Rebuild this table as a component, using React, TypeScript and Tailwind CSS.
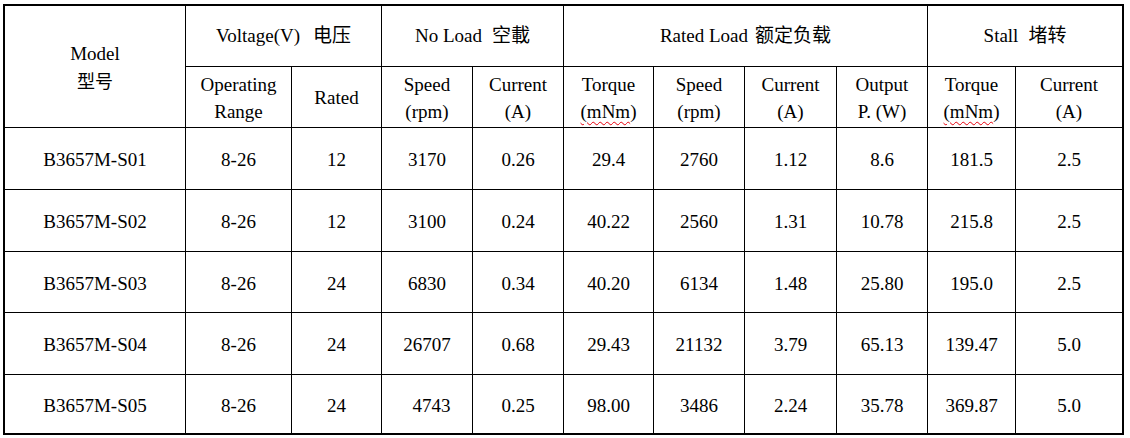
import type React from 'react';

type Row = {
  model: string;
  range: string;
  rated: string;
  nlSpeed: string;
  nlCurrent: string;
  torque: string;
  speed: string;
  current: string;
  output: string;
  stallTorque: string;
  stallCurrent: string;
};

const ROWS: Row[] = [
  { model: 'B3657M-S01', range: '8-26', rated: '12', nlSpeed: '3170', nlCurrent: '0.26', torque: '29.4', speed: '2760', current: '1.12', output: '8.6', stallTorque: '181.5', stallCurrent: '2.5' },
  { model: 'B3657M-S02', range: '8-26', rated: '12', nlSpeed: '3100', nlCurrent: '0.24', torque: '40.22', speed: '2560', current: '1.31', output: '10.78', stallTorque: '215.8', stallCurrent: '2.5' },
  { model: 'B3657M-S03', range: '8-26', rated: '24', nlSpeed: '6830', nlCurrent: '0.34', torque: '40.20', speed: '6134', current: '1.48', output: '25.80', stallTorque: '195.0', stallCurrent: '2.5' },
  { model: 'B3657M-S04', range: '8-26', rated: '24', nlSpeed: '26707', nlCurrent: '0.68', torque: '29.43', speed: '21132', current: '3.79', output: '65.13', stallTorque: '139.47', stallCurrent: '5.0' },
  { model: 'B3657M-S05', range: '8-26', rated: '24', nlSpeed: '4743', nlCurrent: '0.25', torque: '98.00', speed: '3486', current: '2.24', output: '35.78', stallTorque: '369.87', stallCurrent: '5.0' },
];

function Cell({ className = '', children }: { className?: string; children: React.ReactNode }) {
  return (
    <div className={`bg-white flex flex-col items-center justify-center text-center ${className}`}>
      {children}
    </div>
  );
}

// two-line unit header, e.g. "Torque" / "(mNm)"
function Unit({ top, bottom }: { top: string; bottom: React.ReactNode }) {
  return (
    <Cell className="leading-[27px] pt-[2px]">
      <span>{top}</span>
      <span>{bottom}</span>
    </Cell>
  );
}

const Squiggle = () => (
  <span>
    <span className="underline decoration-wavy decoration-red-600 decoration-1 underline-offset-[3px]">(mNm</span>)
  </span>
);

export default function App() {
  return (
    <div className="w-[1130px] h-[438px] bg-white pl-[3px] pt-[4px] text-black text-[19px] font-['Liberation_Serif','Noto_Sans_CJK_SC',serif]">
      <div className="inline-grid border-2 border-black bg-black gap-px grid-cols-[180px_105px_89px_90px_90px_89px_90px_91px_90px_87px_106px] grid-rows-[60px_60px_61px_61px_60px_61px_58px]">
        {/* header row 1 */}
        <Cell className="row-span-2 leading-[29px] pt-[2px]">
          <span>Model</span>
          <span className="text-[18px]">型号</span>
        </Cell>
        <Cell className="col-span-2 pt-[1px]">
          <span>Voltage(V)<span className="ml-[13px]">电压</span></span>
        </Cell>
        <Cell className="col-span-2 pt-[1px]">
          <span>No Load<span className="ml-[10px]">空載</span></span>
        </Cell>
        <Cell className="col-span-4 pt-[1px]">
          <span>Rated Load<span className="ml-[7px]">额定负载</span></span>
        </Cell>
        <Cell className="col-span-2 pt-[1px]">
          <span>Stall<span className="ml-[10px]">堵转</span></span>
        </Cell>

        {/* header row 2 */}
        <Unit top="Operating" bottom="Range" />
        <Cell className="pt-[2px]">Rated</Cell>
        <Unit top="Speed" bottom="(rpm)" />
        <Unit top="Current" bottom="(A)" />
        <Unit top="Torque" bottom={<Squiggle />} />
        <Unit top="Speed" bottom="(rpm)" />
        <Unit top="Current" bottom="(A)" />
        <Unit top="Output" bottom="P. (W)" />
        <Unit top="Torque" bottom={<Squiggle />} />
        <Unit top="Current" bottom="(A)" />

        {ROWS.map(r => (
          <div key={r.model} className="contents">
            <Cell className="pt-[4px]">{r.model}</Cell>
            <Cell className="pt-[4px]">{r.range}</Cell>
            <Cell className="pt-[4px]">{r.rated}</Cell>
            <Cell className={r.nlSpeed === '4743' ? 'pt-[4px] pl-[9px]' : 'pt-[4px]'}>{r.nlSpeed}</Cell>
            <Cell className="pt-[4px]">{r.nlCurrent}</Cell>
            <Cell className="pt-[4px]">{r.torque}</Cell>
            <Cell className="pt-[4px]">{r.speed}</Cell>
            <Cell className="pt-[4px]">{r.current}</Cell>
            <Cell className="pt-[4px]">{r.output}</Cell>
            <Cell className="pt-[4px]">{r.stallTorque}</Cell>
            <Cell className="pt-[4px]">{r.stallCurrent}</Cell>
          </div>
        ))}
      </div>
    </div>
  );
}
